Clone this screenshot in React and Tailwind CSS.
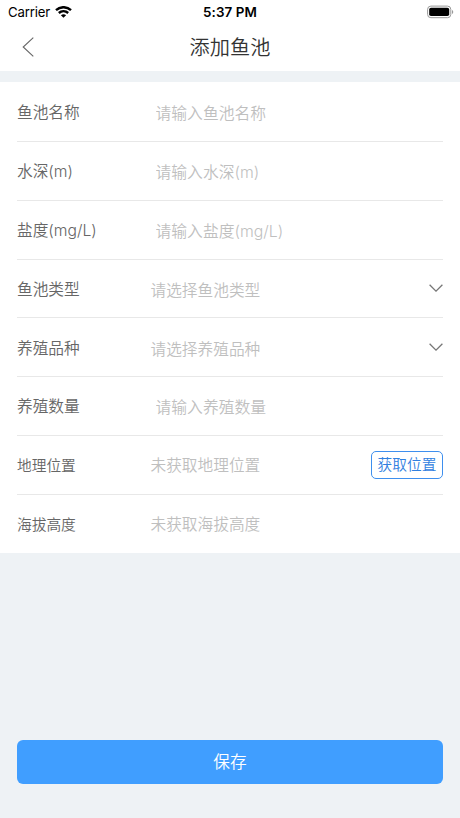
import { useState } from "react";

const initialForm = {
  name: "",
  depth: "",
  salinity: "",
  type: "",
  breed: "",
  quantity: "",
};

function StatusBar() {
  return (
    <div className="relative flex h-6 items-center justify-between pl-2 pr-[6px] text-black">
      <div className="flex items-center gap-[5px]">
        <span className="text-[13.2px] leading-6 tracking-[-0.15px]">Carrier</span>
        <svg width="17" height="12" viewBox="0 0 17 12" fill="none" stroke="currentColor" strokeWidth="2.4">
          <path d="M1 4.1C5.2 .2 11.8 .2 16 4.1" />
          <path d="M3.8 7C6.5 4.6 10.5 4.6 13.2 7" />
          <path d="M8.5 11.8 5.9 9.2C7.4 7.9 9.6 7.9 11.1 9.2Z" fill="currentColor" stroke="none" />
        </svg>
      </div>
      <span className="absolute left-1/2 -translate-x-1/2 whitespace-nowrap text-[13.4px] font-semibold leading-6 tracking-[0.1px]">
        5:37 PM
      </span>
      <svg width="27" height="14" viewBox="0 0 27 14">
        <rect x=".6" y="1.1" width="23.2" height="11.6" rx="3.3" fill="none" stroke="#999" strokeWidth="1" />
        <rect x="2.2" y="2.7" width="20" height="8.4" rx="1.8" fill="#000" />
        <path d="M25 4.9c1.7.7 1.7 3.3 0 4Z" fill="#999" />
      </svg>
    </div>
  );
}

function Row({ label, small, last, children }) {
  return (
    <div className={`flex items-center pt-[2px] ${last ? "h-[58px]" : "h-[58.875px] border-b border-[#e8e8e8]"}`}>
      <label className={`w-[133.5px] shrink-0 whitespace-nowrap font-[350] text-[#666] ${small ? "text-[14.7px]" : "text-[15.7px]"}`}>
        {label}
      </label>
      {children}
    </div>
  );
}

function TextField({ value, onChange, placeholder }) {
  return (
    <input
      value={value}
      onChange={(e) => onChange(e.target.value)}
      placeholder={placeholder}
      className="min-w-0 flex-1 bg-transparent pl-[5px] pt-[2px] text-[15.8px] font-[350] text-[#666] outline-none placeholder:text-[#bfbfbf]"
    />
  );
}

function Picker({ value, placeholder }) {
  return (
    <button className="flex flex-1 items-center justify-between text-left">
      <span className="pt-[2px] text-[15.7px] font-[350] text-[#bfbfbf]">{value || placeholder}</span>
      <svg className="mb-[2px]" width="14" height="8" viewBox="0 0 14 8" fill="none" stroke="#777" strokeWidth="1.3">
        <path d="M.6 .7 7 7.1 13.4 .7" />
      </svg>
    </button>
  );
}

export default function App() {
  const [form, setForm] = useState(initialForm);

  const update = (key) => (value) => setForm({ ...form, [key]: value });

  return (
    <div className="flex h-[818px] w-[460px] flex-col bg-[#eef2f5] font-[Inter,'Noto_Sans_CJK_SC',sans-serif]">
      <header className="h-[71px] bg-white">
        <StatusBar />
        <div className="grid h-[46px] grid-cols-[1fr_auto_1fr] items-center px-[22px]">
          <button aria-label="返回">
            <svg width="12" height="20" viewBox="0 0 12 20" fill="none" stroke="#666" strokeWidth="1.1">
              <path d="M11.3 .6 1.2 10 11.3 19.4" />
            </svg>
          </button>
          <h1 className="pt-[2px] text-[20.2px] font-[350] text-[#333]">添加鱼池</h1>
        </div>
      </header>

      <main className="mt-[11px] bg-white px-[17px] pt-[0.875px]">
        <Row label="鱼池名称">
          <TextField value={form.name} onChange={update("name")} placeholder="请输入鱼池名称" />
        </Row>
        <Row label="水深(m)">
          <TextField value={form.depth} onChange={update("depth")} placeholder="请输入水深(m)" />
        </Row>
        <Row label="盐度(mg/L)">
          <TextField value={form.salinity} onChange={update("salinity")} placeholder="请输入盐度(mg/L)" />
        </Row>
        <Row label="鱼池类型">
          <Picker value={form.type} placeholder="请选择鱼池类型" />
        </Row>
        <Row label="养殖品种">
          <Picker value={form.breed} placeholder="请选择养殖品种" />
        </Row>
        <Row label="养殖数量">
          <TextField value={form.quantity} onChange={update("quantity")} placeholder="请输入养殖数量" />
        </Row>
        <Row label="地理位置" small>
          <span className="flex-1 text-[15.7px] font-[350] text-[#bfbfbf]">未获取地理位置</span>
          <button className="mb-[2px] h-7 w-[72px] whitespace-nowrap rounded-[5px] border border-[#3e8fee] pt-px text-[14.7px] font-[350] leading-none text-[#3080e0]">
            获取位置
          </button>
        </Row>
        <Row label="海拔高度" small last>
          <span className="flex-1 text-[15.7px] font-[350] text-[#bfbfbf]">未获取海拔高度</span>
        </Row>
      </main>

      <footer className="mt-auto px-[17px] pb-[34px]">
        <button className="h-[44px] w-full rounded-[6px] bg-[#409eff] pt-[2px] text-[16.7px] font-[350] text-white">保存</button>
      </footer>
    </div>
  );
}
